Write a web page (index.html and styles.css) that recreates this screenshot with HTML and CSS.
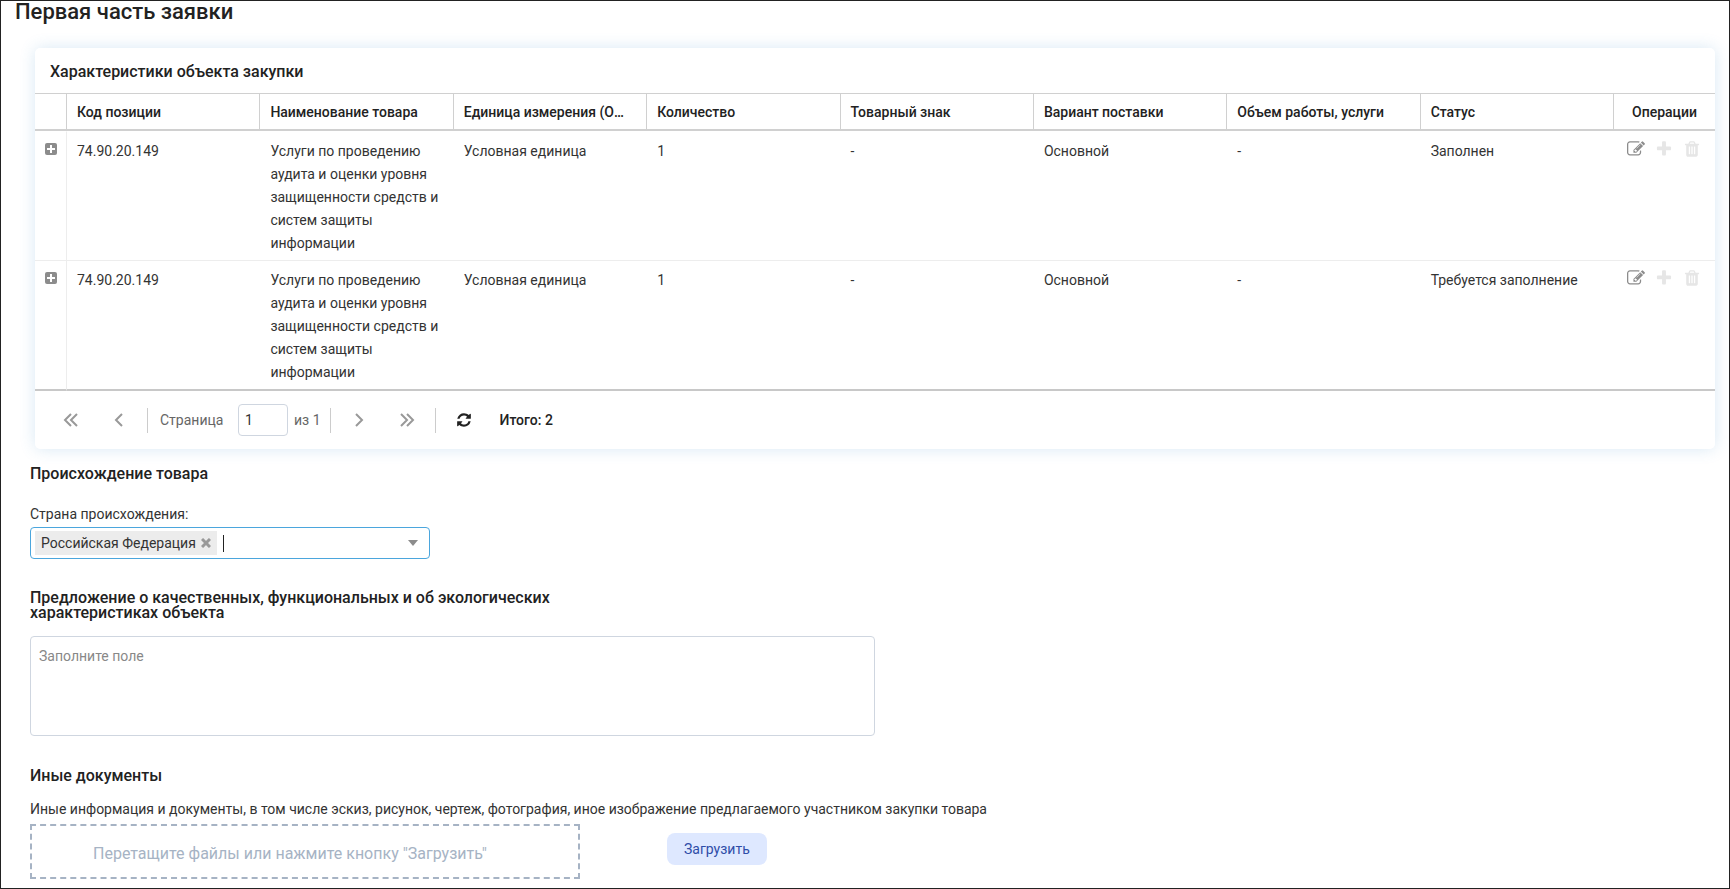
FILE: index.html
```html
<!DOCTYPE html>
<html lang="ru">
<head>
<meta charset="utf-8">
<title>Первая часть заявки</title>
<link rel="stylesheet" href="styles.css">
</head>
<body>
<svg class="sprite" aria-hidden="true">
  <symbol id="i-expand" viewBox="0 0 12 12"><rect width="12" height="12" rx="2"/><path class="sign" d="M2 5h3V2h2v3h3v2H7v3H5V7H2z"/></symbol>
  <symbol id="i-edit" viewBox="0 0 1792 1792"><path d="M888 1184l116-116-152-152-116 116v56h96v96h56zm440-720q-16-16-33 1l-350 350q-17 17-1 33t33-1l350-350q17-17 1-33zm80 594v190q0 119-84.500 203.500t-203.500 84.500h-832q-119 0-203.500-84.500t-84.500-203.500v-832q0-119 84.500-203.500t203.500-84.500h832q63 0 117 25 15 7 18 23 3 17-9 29l-49 49q-14 14-32 8-23-6-45-6h-832q-66 0-113 47t-47 113v832q0 66 47 113t113 47h832q66 0 113-47t47-113v-126q0-13 9-22l64-64q15-15 35-7t20 29zm-96-738l288 288-672 672h-288v-288zm444 132l-92 92-288-288 92-92q28-28 68-28t68 28l152 152q28 28 28 68t-28 68z"/></symbol>
  <symbol id="i-plus" viewBox="0 0 1792 1792"><path d="M1600 736v192q0 40-28 68t-68 28h-416v416q0 40-28 68t-68 28h-192q-40 0-68-28t-28-68v-416h-416q-40 0-68-28t-28-68v-192q0-40 28-68t68-28h416v-416q0-40 28-68t68-28h192q40 0 68 28t28 68v416h416q40 0 68 28t28 68z"/></symbol>
  <symbol id="i-trash" viewBox="0 0 1792 1792"><path d="M704 1376v-704q0-14-9-23t-23-9h-64q-14 0-23 9t-9 23v704q0 14 9 23t23 9h64q14 0 23-9t9-23zm256 0v-704q0-14-9-23t-23-9h-64q-14 0-23 9t-9 23v704q0 14 9 23t23 9h64q14 0 23-9t9-23zm256 0v-704q0-14-9-23t-23-9h-64q-14 0-23 9t-9 23v704q0 14 9 23t23 9h64q14 0 23-9t9-23zm-544-992h448l-48-117q-7-9-17-11h-317q-10 2-17 11zm928 32v64q0 14-9 23t-23 9h-96v948q0 83-47 143.500t-113 60.500h-832q-66 0-113-58.500t-47-141.500v-952h-96q-14 0-23-9t-9-23v-64q0-14 9-23t23-9h309l70-167q15-37 54-63t79-26h320q40 0 79 26t54 63l70 167h309q14 0 23 9t9 23z"/></symbol>
  <symbol id="i-refresh" viewBox="0 0 1792 1792"><path d="M1639 1056q0 5-1 7-64 268-268 434.500t-478 166.500q-146 0-282.500-55t-243.500-157l-129 129q-19 19-45 19t-45-19-19-45v-448q0-26 19-45t45-19h448q26 0 45 19t19 45-19 45l-137 137q71 66 161 102t187 36q134 0 250-65t186-179q11-17 53-117 8-23 30-23h192q13 0 22.500 9.500t9.500 22.500zm25-800v448q0 26-19 45t-45 19h-448q-26 0-45-19t-19-45 19-45l138-138q-148-137-349-137-134 0-250 65t-186 179q-11 17-53 117-8 23-30 23h-199q-13 0-22.500-9.500t-9.500-22.500v-7q65-268 270-434.500t480-166.500q146 0 284 55.500t245 156.500l130-129q19-19 45-19t45 19 19 45z"/></symbol>
  <symbol id="i-prev" viewBox="0 0 16 16"><path class="line" d="M11 2 5 8l6 6"/></symbol>
  <symbol id="i-next" viewBox="0 0 16 16"><path class="line" d="M5 2l6 6-6 6"/></symbol>
  <symbol id="i-first" viewBox="0 0 16 16"><path class="line" d="M8 2 2 8l6 6M14 2 8 8l6 6"/></symbol>
  <symbol id="i-last" viewBox="0 0 16 16"><path class="line" d="M2 2l6 6-6 6M8 2l6 6-6 6"/></symbol>
  <symbol id="i-close" viewBox="0 0 10 10"><path class="cross" d="M1 1l8 8M9 1 1 9"/></symbol>
  <symbol id="i-caret" viewBox="0 0 10 6"><path d="M0 0h10L5 6z"/></symbol>
</svg>

<main class="page">
  <h1 class="page-title">Первая часть заявки</h1>

  <section class="card">
    <h2 class="card-title">Характеристики объекта закупки</h2>
    <table class="grid">
      <colgroup>
        <col class="col-toggle"><col><col><col><col><col><col><col><col><col class="col-actions">
      </colgroup>
      <thead>
        <tr>
          <th></th>
          <th>Код позиции</th>
          <th>Наименование товара</th>
          <th>Единица измерения (ОКЕИ)</th>
          <th>Количество</th>
          <th>Товарный знак</th>
          <th>Вариант поставки</th>
          <th>Объем работы, услуги</th>
          <th>Статус</th>
          <th class="center">Операции</th>
        </tr>
      </thead>
      <tbody>
        <tr>
          <td class="toggle"><button class="icon-btn" type="button" aria-label="Развернуть"><svg class="icon-expand"><use href="#i-expand"/></svg></button></td>
          <td>74.90.20.149</td>
          <td>Услуги по проведению аудита и оценки уровня защищенности средств и систем защиты информации</td>
          <td>Условная единица</td>
          <td>1</td>
          <td>-</td>
          <td>Основной</td>
          <td>-</td>
          <td>Заполнен</td>
          <td class="actions"><div class="action-row">
            <button class="icon-btn" type="button" aria-label="Редактировать"><svg class="icon icon-lg"><use href="#i-edit"/></svg></button>
            <button class="icon-btn" type="button" aria-label="Добавить" disabled><svg class="icon icon-lg"><use href="#i-plus"/></svg></button>
            <button class="icon-btn" type="button" aria-label="Удалить" disabled><svg class="icon icon-lg"><use href="#i-trash"/></svg></button>
          </div></td>
        </tr>
        <tr>
          <td class="toggle"><button class="icon-btn" type="button" aria-label="Развернуть"><svg class="icon-expand"><use href="#i-expand"/></svg></button></td>
          <td>74.90.20.149</td>
          <td>Услуги по проведению аудита и оценки уровня защищенности средств и систем защиты информации</td>
          <td>Условная единица</td>
          <td>1</td>
          <td>-</td>
          <td>Основной</td>
          <td>-</td>
          <td>Требуется заполнение</td>
          <td class="actions"><div class="action-row">
            <button class="icon-btn" type="button" aria-label="Редактировать"><svg class="icon icon-lg"><use href="#i-edit"/></svg></button>
            <button class="icon-btn" type="button" aria-label="Добавить" disabled><svg class="icon icon-lg"><use href="#i-plus"/></svg></button>
            <button class="icon-btn" type="button" aria-label="Удалить" disabled><svg class="icon icon-lg"><use href="#i-trash"/></svg></button>
          </div></td>
        </tr>
      </tbody>
    </table>
    <nav class="pager" aria-label="Страницы">
      <div class="pager-group">
        <button class="pager-btn" type="button" aria-label="Первая страница"><svg class="icon icon-md"><use href="#i-first"/></svg></button>
        <button class="pager-btn" type="button" aria-label="Предыдущая страница"><svg class="icon icon-md"><use href="#i-prev"/></svg></button>
      </div>
      <div class="pager-group pager-page">
        <label class="pager-label" for="page">Страница</label>
        <input class="pager-input" id="page" type="text" value="1">
        <span>из 1</span>
      </div>
      <div class="pager-group">
        <button class="pager-btn" type="button" aria-label="Следующая страница"><svg class="icon icon-md"><use href="#i-next"/></svg></button>
        <button class="pager-btn" type="button" aria-label="Последняя страница"><svg class="icon icon-md"><use href="#i-last"/></svg></button>
      </div>
      <div class="pager-group">
        <button class="pager-btn refresh" type="button" aria-label="Обновить"><svg class="icon icon-md"><use href="#i-refresh"/></svg></button>
        <span class="total">Итого: 2</span>
      </div>
    </nav>
  </section>

  <section class="form">
    <h2 class="section-title">Происхождение товара</h2>
    <label class="label" for="country">Страна происхождения:</label>
    <div class="combo">
      <span class="chip">Российская Федерация<button class="icon-btn" type="button" aria-label="Убрать"><svg class="icon-close"><use href="#i-close"/></svg></button></span>
      <span class="cursor"></span>
      <input class="combo-input" id="country" type="text">
      <button class="icon-btn" type="button" aria-label="Показать список"><svg class="icon-caret"><use href="#i-caret"/></svg></button>
    </div>

    <h2 class="section-title offer-title"><label for="offer">Предложение о качественных, функциональных и об экологических характеристиках объекта</label></h2>
    <textarea class="offer" id="offer" placeholder="Заполните поле"></textarea>

    <h2 class="section-title docs-title">Иные документы</h2>
    <p class="note">Иные информация и документы, в том числе эскиз, рисунок, чертеж, фотография, иное изображение предлагаемого участником закупки товара</p>
    <div class="upload">
      <div class="dropzone">Перетащите файлы или нажмите кнопку "Загрузить"</div>
      <button class="upload-btn" type="button">Загрузить</button>
    </div>
  </section>
</main>
</body>
</html>
```
FILE: styles.css
```css
* { box-sizing: border-box; }

body {
  margin: 0;
  background: #fff;
  color: #333;
  font: 14px/23px Roboto, "Noto Sans", sans-serif;
}

button, input, textarea { font: inherit; color: inherit; }

.sprite { display: none; }
.line { fill: none; stroke: currentColor; stroke-width: 2; }
.cross { fill: none; stroke: currentColor; stroke-width: 3; }
.sign { fill: #fff; }

.page {
  min-height: 100vh;
  padding: 0 14px 8px;
  border: 1px solid #222;
}

.page-title {
  margin: 0;
  color: #222;
  font-size: 22px;
  font-weight: 500;
  line-height: 21px;
}

.card {
  margin: 26px 0 0 20px;
  border-radius: 5px;
  background: #fff;
  box-shadow: 0 0 16px rgba(60, 140, 200, 0.2);
}

.card-title {
  margin: 0;
  padding: 12px 15px 10px;
  color: #222;
  font-size: 16px;
  font-weight: 500;
  line-height: 23px;
}

.grid {
  width: 100%;
  table-layout: fixed;
  border-spacing: 0;
}

.col-toggle { width: 32px; }
.col-actions { width: 101px; }

.grid th {
  height: 38px;
  padding: 2px 16px 0 10px;
  overflow: hidden;
  border-top: 1px solid #d0d0d0;
  border-right: 1px solid #d0d0d0;
  border-bottom: 2px solid #d0d0d0;
  color: #222;
  font-weight: 500;
  text-align: left;
  text-overflow: ellipsis;
  white-space: nowrap;
}

.grid th:last-child { border-right: 0; }
.grid .center { padding: 2px 0 0; text-align: center; }

.grid td {
  padding: 8px 10px 5px;
  border-bottom: 1px solid #ededed;
  vertical-align: top;
}

.grid .toggle { padding: 11px 0 0 10px; border-right: 1px solid #ededed; }
.grid .actions { padding: 8px 0 0 13px; }
.action-row { display: flex; gap: 10px; }
.grid tbody tr:first-child td { border-top: 1px solid #fff; }
.grid tbody tr:last-child td { border-bottom: 2px solid #c8c8c8; }

.icon-btn, .pager-btn {
  display: flex;
  align-items: center;
  justify-content: center;
  padding: 0;
  border: 0;
  background: none;
  color: #8c8c8c;
}

.icon-btn:disabled { color: #e6e6e6; }
.icon { fill: currentColor; }
.icon-md { width: 16px; height: 16px; }
.icon-lg { width: 18px; height: 18px; }
.icon-expand { width: 12px; height: 12px; fill: currentColor; }

.pager {
  display: flex;
  align-items: center;
  min-height: 58px;
  padding: 0 12px;
  color: #666;
}

.pager-group { display: flex; align-items: center; height: 25px; }
.pager-group + .pager-group { border-left: 1px solid #ccc; }
.pager-btn { width: 48px; height: 32px; color: #999; }
.pager-group:first-child { padding-right: 4px; }
.pager-group:nth-child(3) { padding: 0 4px; }
.pager-page { gap: 6px; padding: 0 9px 0 12px; }
.pager-label { width: 72px; }

.pager-input {
  width: 50px;
  height: 32px;
  padding: 0 6px;
  border: 1px solid #cfd6e0;
  border-radius: 4px;
  color: #333;
}

.pager .refresh { width: 56px; color: #222; }
.total { padding-left: 8px; color: #222; font-weight: 500; }

.form { padding-left: 15px; }

.section-title {
  margin: 17px 0 22px;
  max-width: 560px;
  color: #222;
  font-size: 16px;
  font-weight: 500;
  line-height: 15px;
}

.label { display: block; margin-bottom: 1px; }

.combo {
  display: flex;
  align-items: center;
  gap: 6px;
  width: 400px;
  height: 32px;
  padding: 0 11px 0 4px;
  border: 1px solid #4ba6dd;
  border-radius: 4px;
}

.chip {
  display: flex;
  align-items: center;
  gap: 5px;
  height: 24px;
  padding: 0 6px;
  background: #ececec;
}

.chip .icon-btn { color: #999; }
.icon-close { width: 10px; height: 10px; }
.icon-caret { width: 10px; height: 6px; fill: currentColor; }
.cursor { width: 1px; height: 17px; background: #222; }
.combo-input { flex: 1; min-width: 0; padding: 0; border: 0; outline: 0; background: none; }

.offer-title { margin: 31px 0 16px; }

.offer {
  display: block;
  width: 845px;
  max-width: 100%;
  height: 100px;
  padding: 8px;
  border: 1px solid #cfd6e0;
  border-radius: 4px;
  resize: none;
}

.offer::placeholder { color: #888; }
.docs-title { margin: 32px 0 15px; }
.note { margin: 0 0 3px; }
.upload { display: flex; align-items: flex-start; gap: 87px; }

.dropzone {
  width: 550px;
  padding: 16px 0 12px 61px;
  border: 2px dashed #a6b3c4;
  color: #a6b3c4;
  font-size: 16px;
}

.upload-btn {
  height: 32px;
  margin-top: 9px;
  padding: 0 17px;
  border: 0;
  border-radius: 8px;
  background: #dee8ff;
  color: #2f4da8;
}
```
